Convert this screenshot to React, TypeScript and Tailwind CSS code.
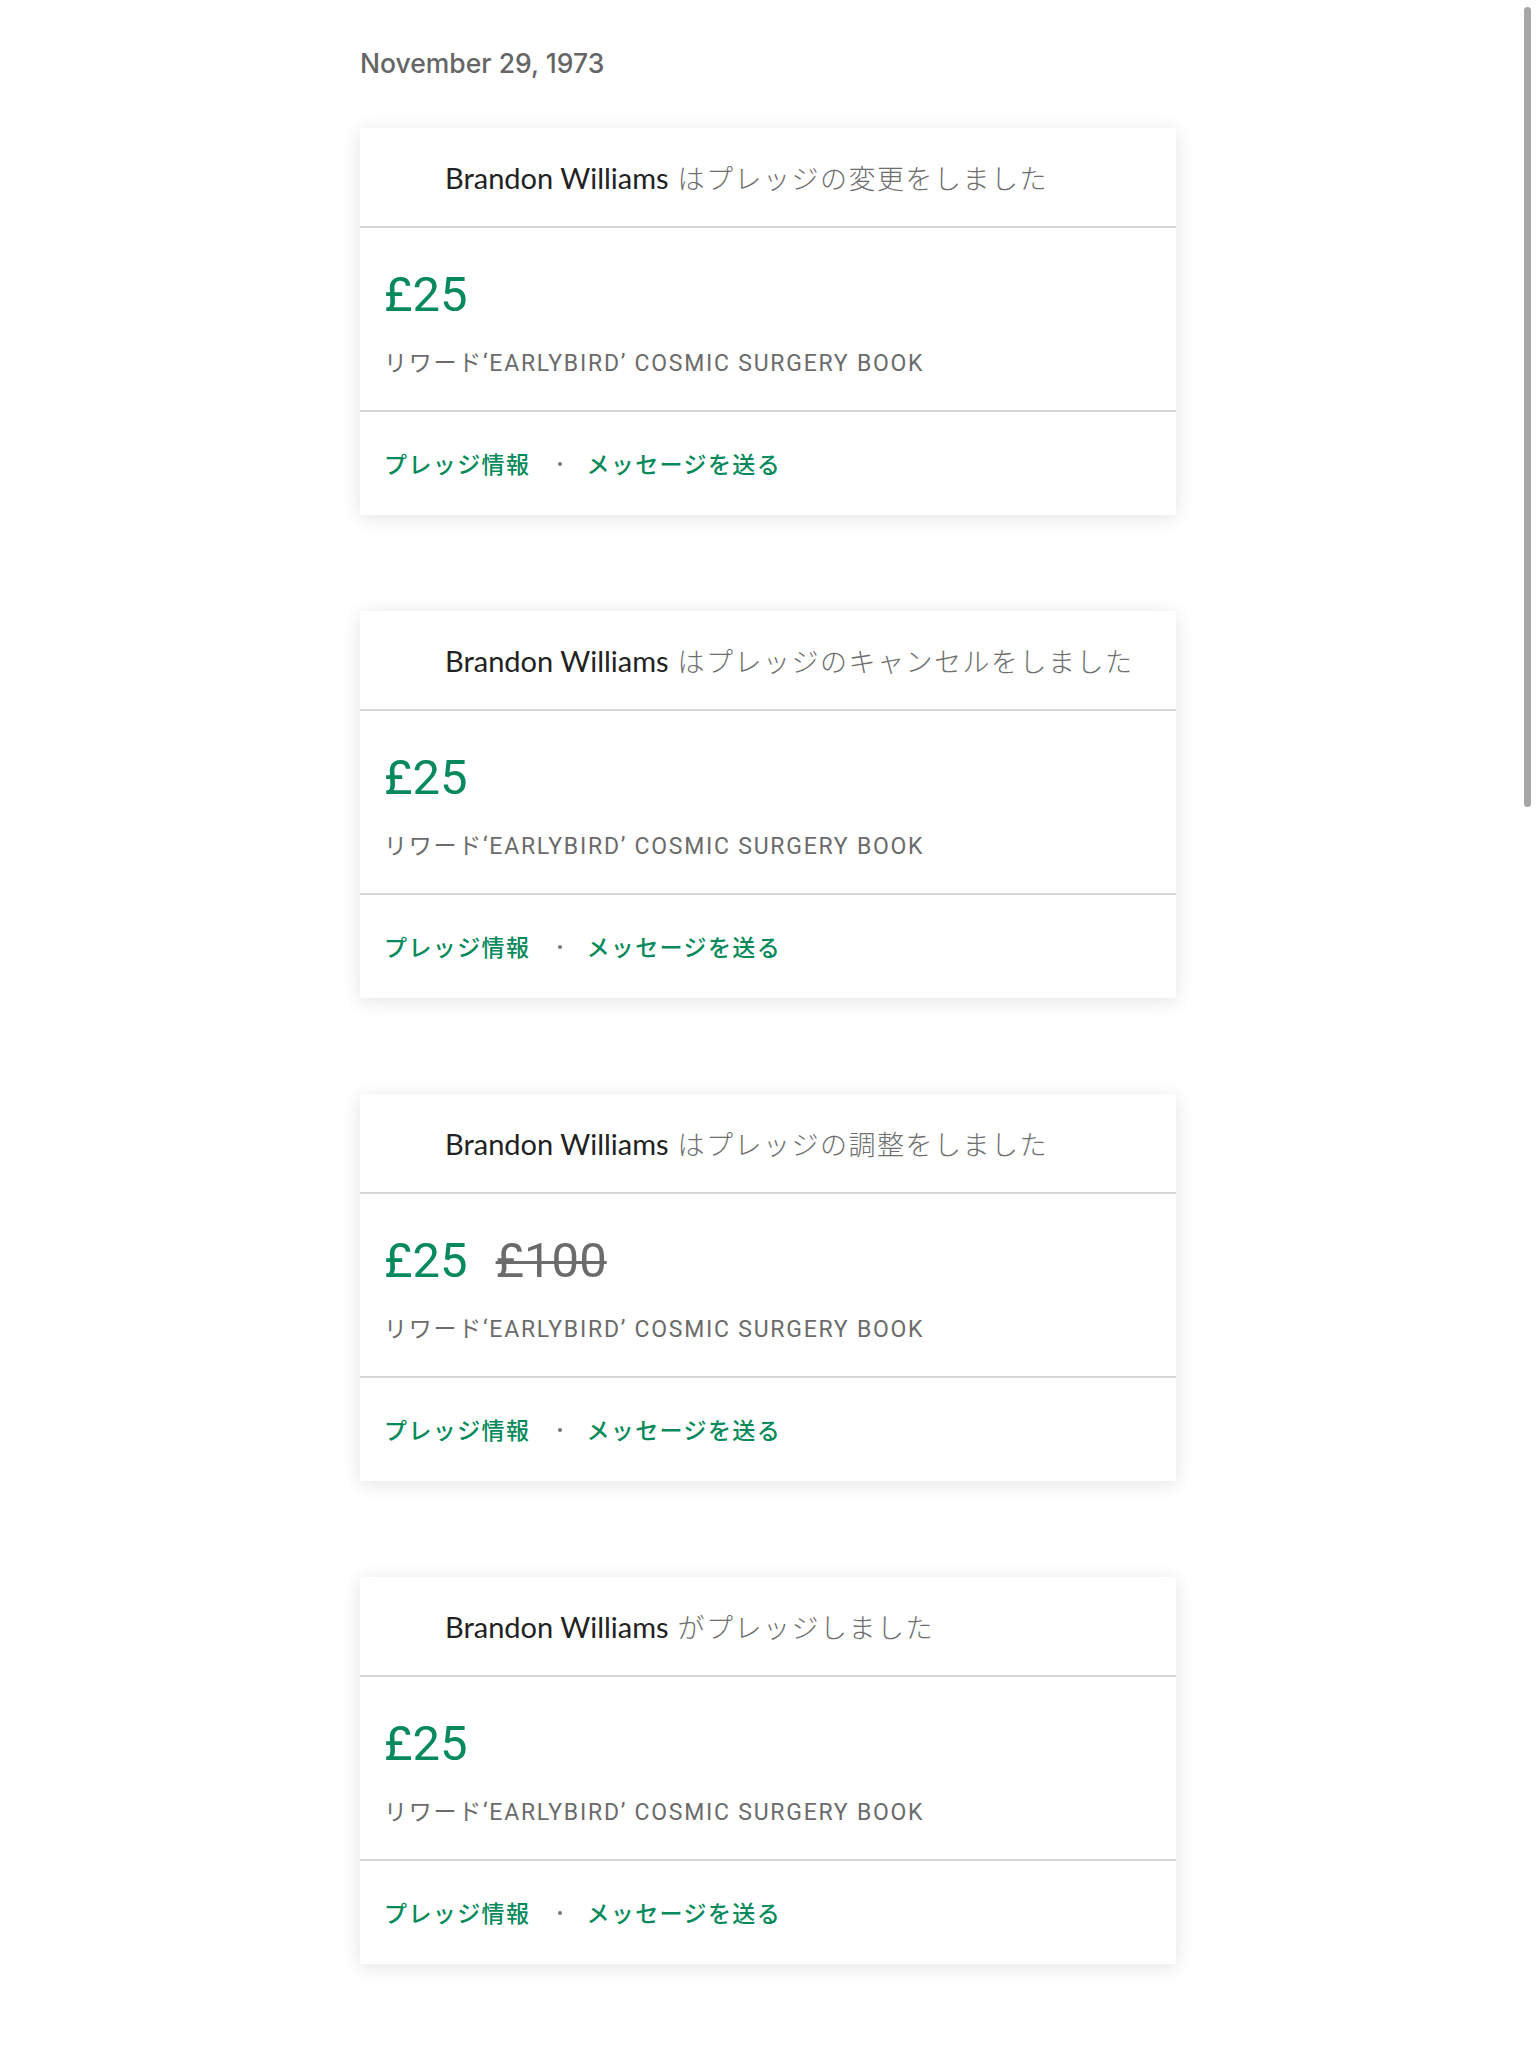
const rewardName = "リワード\u2018EARLYBIRD\u2019 COSMIC SURGERY BOOK";

type Activity = {
  id: number;
  action: string;
  amount: string;
  previous?: string;
};

const activities: Activity[] = [
  { id: 1, action: "はプレッジの変更をしました", amount: "£25" },
  { id: 2, action: "はプレッジのキャンセルをしました", amount: "£25" },
  { id: 3, action: "はプレッジの調整をしました", amount: "£25", previous: "£100" },
  { id: 4, action: "がプレッジしました", amount: "£25" },
];

function ActivityCard({ item }: { item: Activity }) {
  return (
    <div className="bg-white shadow-[0_3px_18px_rgba(0,0,0,0.11)]">
      {/* header */}
      <div className="h-[100px] flex items-center pl-[85px] border-b-2 border-[#d6d6d6] leading-none">
        <span className="font-['Lato','Noto_Sans_CJK_JP',sans-serif] text-[29px] text-[#222]">Brandon Williams</span>
        <span className="ml-[9px] font-['Noto_Sans_CJK_JP',sans-serif] text-[27px] font-light tracking-[1.5px] text-[#6e6e6e]">
          {item.action}
        </span>
      </div>

      {/* body */}
      <div className="h-[184px] px-6 pt-[42px] border-b-2 border-[#d6d6d6] font-['Roboto','Noto_Sans_CJK_JP',sans-serif]">
        <div className="flex items-baseline gap-[28px] text-[49px] leading-none">
          <span className="text-[#078a5b]">{item.amount}</span>
          {item.previous && (
            <span className="text-[#6b6b6b] line-through decoration-[3px]">{item.previous}</span>
          )}
        </div>
        <div className="mt-[33px] text-[23px] leading-none text-[#6b6b6b] tracking-[1.75px]">{rewardName}</div>
      </div>

      {/* footer */}
      <div className="h-[103px] flex items-center px-6 font-['Noto_Sans_CJK_JP',sans-serif] text-[23px] font-medium text-[#078a5b] tracking-[1.4px] leading-none">
        <a href="#">プレッジ情報</a>
        <span className="ml-[28px] mr-[24px] w-[4px] h-[4px] rounded-full bg-[#777]" />
        <a href="#">メッセージを送る</a>
      </div>
    </div>
  );
}

export default function App() {
  return (
    <div className="min-h-screen bg-white">
      <div className="w-[816px] mx-auto pt-[48px] pb-[64px]">
        <h2 className="h-[32px] mb-[48px] flex items-center font-['Inter','Liberation_Sans',sans-serif] text-[26.5px] font-medium text-[#666]">
          November 29, 1973
        </h2>
        <div className="flex flex-col gap-[96px]">
          {activities.map((a) => (
            <ActivityCard key={a.id} item={a} />
          ))}
        </div>
      </div>

      {/* overlay scrollbar thumb */}
      <div className="fixed top-[7px] right-[5px] w-[7px] h-[800px] rounded-full bg-[#a6a6a6]" />
    </div>
  );
}
